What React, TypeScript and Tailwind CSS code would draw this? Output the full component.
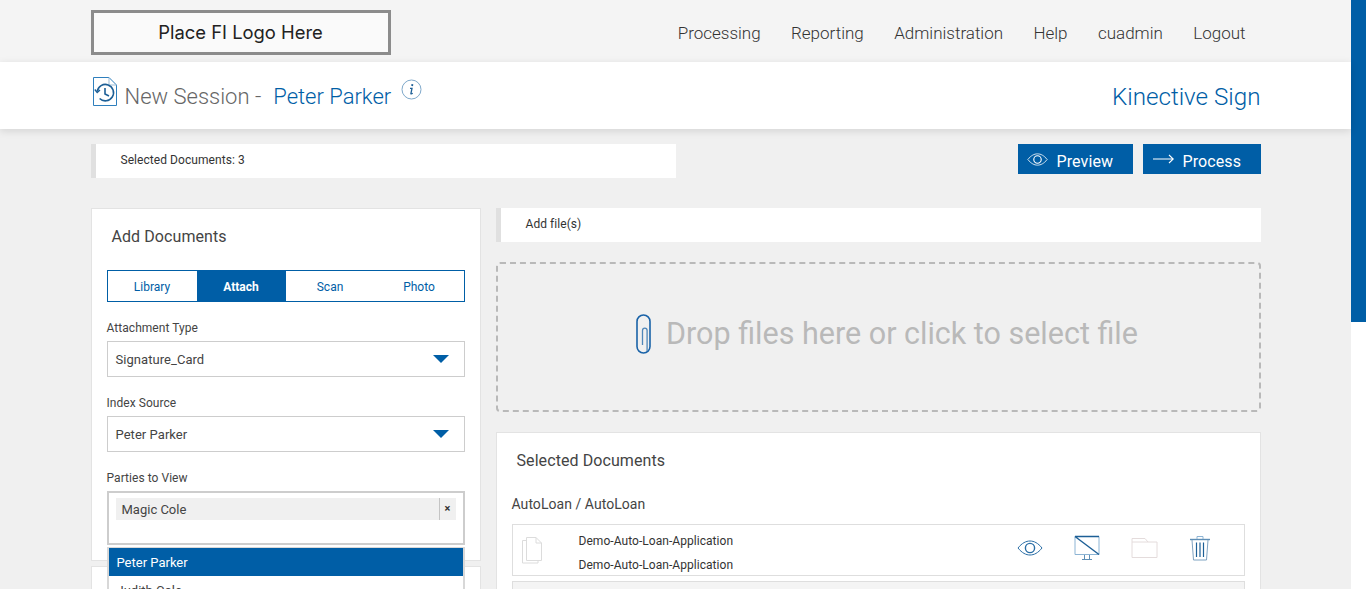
const navItems = ['Processing', 'Reporting', 'Administration', 'Help', 'cuadmin', 'Logout'];

function SessionIcon() {
  return (
    <svg width="26" height="31" viewBox="0 0 26 31" fill="none" stroke="#2f7fbd" strokeWidth="1">
      <path d="M1.5 1.5H17L24.5 9V29.5H1.5Z" />
      <path d="M17 1.5V9H24.5" stroke="#9dbcd6" />
      <path d="M5.2 15.5a8.2 8.2 0 1 1 2.4 7" strokeWidth="1.6" stroke="#1d5f96" />
      <path d="M2.8 13.5L5.2 16.5L8 14" strokeWidth="1.4" stroke="#1d5f96" />
      <path d="M13 12V18L17 20" strokeWidth="1.6" stroke="#1d5f96" />
    </svg>
  );
}

function InfoIcon() {
  return (
    <svg width="21" height="21" viewBox="0 0 21 21" fill="none">
      <circle cx="10.5" cy="10.5" r="9.5" stroke="#7fa9cb" />
      <path d="M11.4 5.2l-.3 1.8" stroke="#1d5f96" strokeWidth="1.8" />
      <path d="M9 9.3h2l-1.1 5.2c-.1.6.5.7 1.8-.2" stroke="#1d5f96" strokeWidth="1.3" />
    </svg>
  );
}

function Caret() {
  return <span className="w-0 h-0 border-l-[8px] border-r-[8px] border-t-[8px] border-l-transparent border-r-transparent border-t-[#005ea6]" />;
}

function Clip() {
  return (
    <svg width="15" height="40" viewBox="0 0 15 40" fill="none" stroke="#1a63a8" strokeWidth="1.6">
      <path d="M1 32.5V7.5a6.5 6.5 0 0 1 13 0V32.5a6.5 6.5 0 0 1-13 0" />
      <path d="M6.5 31V16.5a2.3 2.3 0 0 1 4.6 0V37" stroke="#4f86b8" strokeWidth="1.3" />
    </svg>
  );
}

function WideEye({ color, width, height }: { color: string; width: number; height: number }) {
  return (
    <svg width={width} height={height} viewBox="0 0 26 16" fill="none" stroke={color} strokeWidth="1">
      <path d="M1 8C5 3 9 1 13 1s8 2 12 7c-4 5-8 7-12 7S5 13 1 8Z" />
      <circle cx="13" cy="8" r="4.6" strokeWidth="1.4" />
    </svg>
  );
}

function ThinArrow() {
  return (
    <svg width="21" height="10" viewBox="0 0 21 10" fill="none" stroke="#fff" strokeWidth="1.1">
      <path d="M0 5H20M16 1L20.3 5L16 9" />
    </svg>
  );
}

function DocIcon() {
  return (
    <svg width="22" height="28" viewBox="0 0 22 28" fill="none" stroke="#dcdcdc">
      <path d="M5.5 1.5H15L20.5 7V24.5H5.5Z" />
      <path d="M15 1.5V7H20.5" />
      <path d="M5.5 4.5H1.5V27H17V24.5" />
    </svg>
  );
}

function NoSignIcon() {
  return (
    <svg width="26" height="26" viewBox="0 0 26 26" fill="none">
      <path d="M1 1.5H25V19.5H1Z" stroke="#8db4d4" />
      <path d="M1 1.5H25M1 1.5L25 19.5" stroke="#1d5f96" strokeWidth="1.4" />
      <path d="M10.5 20V24M15.5 20V24M8 24.5H18" stroke="#5f8fb6" />
    </svg>
  );
}

function FolderIcon() {
  return (
    <svg width="27" height="22" viewBox="0 0 27 22" fill="none" stroke="#e4dcdc">
      <path d="M1 20.5V1.5H14L17 5H26V20.5Z" />
      <path d="M1 5H17" />
    </svg>
  );
}

function TrashIcon() {
  return (
    <svg width="22" height="26" viewBox="0 0 22 26" fill="none">
      <path d="M1 4.5H21" stroke="#5f8fb6" strokeWidth="1.4" />
      <path d="M8 4V1.5H14V4" stroke="#8db4d4" />
      <path d="M3 5L4.5 25H17.5L19 5" stroke="#7fa3c2" />
      <path d="M7.5 7.5V22M11 7.5V22M14.5 7.5V22" stroke="#1d5f96" strokeWidth="1.2" />
    </svg>
  );
}

function NoteBar({ label, className }: { label: string; className: string }) {
  return (
    <div className={`h-[34px] bg-white border-l-[5px] border-[#e0e0e0] flex items-center pl-[25px] pb-[2px] text-[12px] tracking-[0.06px] text-[#333] ${className}`}>
      {label}
    </div>
  );
}

function SelectBox({ label, value }: { label: string; value: string }) {
  return (
    <div className="mb-[19px]">
      <div className="text-[12px] leading-[14px] tracking-[0.05px] text-[#444] mb-[6px]">{label}</div>
      <div className="h-[36px] border border-[#cdcdcd] flex items-center justify-between pl-[8px] pr-[15px] text-[13px] tracking-[0.05px] text-[#444]">
        <span className="pt-[1px]">{value}</span>
        <Caret />
      </div>
    </div>
  );
}

export default function App() {
  return (
    <div className="h-[589px] overflow-hidden flex bg-white font-['Roboto',sans-serif]">
      <div className="w-[1351px] shrink-0 bg-[#f0f0f0]">
        <header className="h-[62px] bg-[#f4f4f4]">
          <div className="w-[1170px] mx-auto flex justify-between pt-[10px]">
            <div className="w-[300px] h-[45px] pt-[1px] border-[3px] border-[#8c8c8c] bg-[#fafafa] flex items-center justify-center text-[18.4px] text-[#222] font-['Inter',sans-serif]">
              Place FI Logo Here
            </div>
            <nav className="flex gap-[30.4px] pr-[15px] pt-[12px] text-[17px] leading-[22px] font-light text-[#333]">
              {navItems.map((item) => (
                <span key={item}>{item}</span>
              ))}
            </nav>
          </div>
        </header>

        <div className="h-[67px] bg-white shadow-[0_2px_8px_rgba(0,0,0,0.12)] relative">
          <div className="w-[1170px] mx-auto flex justify-between h-full">
            <div className="flex items-start pl-[1px] pt-[14px]">
              <SessionIcon />
              <span className="ml-[7px] mt-[6px] text-[22px] leading-[30px] font-light text-[#666]">New Session - </span>
              <span className="ml-[12px] mt-[6px] text-[22px] leading-[30px] font-light text-[#005ea6]">Peter Parker</span>
              <span className="ml-[10px] mt-[3px]"><InfoIcon /></span>
            </div>
            <div className="pt-[20px] text-[24.2px] leading-[30px] font-light text-[#005ea6]">Kinective Sign</div>
          </div>
        </div>

        <div className="w-[1170px] mx-auto">
          <div className="flex justify-between pt-[15px]">
            <NoteBar label="Selected Documents: 3" className="w-[585px]" />
            <div className="flex gap-[10px] text-[16px] text-white">
              <div className="w-[115px] h-[30px] bg-[#005ea6] flex items-center pl-[9px]">
                <WideEye color="#fff" width={21} height={13} />
                <span className="ml-[9px] pt-[6px] tracking-[0.1px]">Preview</span>
              </div>
              <div className="w-[118px] h-[30px] bg-[#005ea6] flex items-center pl-[10px]">
                <ThinArrow />
                <span className="ml-[9px] pt-[6px] tracking-[0.1px]">Process</span>
              </div>
            </div>
          </div>

          <div className="flex gap-[15px] pt-[30px]">
            <div className="w-[390px] shrink-0">
              <section className="relative h-[353px] bg-white border border-[#e3e3e3] px-[15px]">
                <h2 className="pt-[18px] pl-[5px] text-[16px] leading-[20px] tracking-[0.08px] text-[#444]">Add Documents</h2>
                <div className="mt-[23px] h-[32px] border border-[#005ea6] flex text-[12px] text-[#005ea6]">
                  <span className="w-[89px] pt-[1px] flex items-center justify-center">Library</span>
                  <span className="w-[89px] pt-[1px] flex items-center justify-center bg-[#005ea6] text-white font-bold">Attach</span>
                  <span className="w-[89px] pt-[1px] flex items-center justify-center">Scan</span>
                  <span className="w-[89px] pt-[1px] flex items-center justify-center">Photo</span>
                </div>
                <div className="mt-[19px]">
                  <SelectBox label="Attachment Type" value="Signature_Card" />
                  <SelectBox label="Index Source" value="Peter Parker" />
                  <div className="text-[12px] leading-[14px] tracking-[0.05px] text-[#444] mb-[6px]">Parties to View</div>
                  <div className="h-[54px] border-2 border-[#cdcdcd] pl-[7px] pr-[7px] pt-[5px]">
                    <div className="h-[22px] bg-[#f0f0f0] flex items-center justify-between text-[13px] text-[#444] pl-[6px]">
                      <span className="pt-[1px]">Magic Cole</span>
                      <span className="w-[17px] h-full border-l border-[#c4c4c4] flex items-center justify-center text-[11px] font-bold text-[#333]">×</span>
                    </div>
                  </div>
                </div>
                <div className="absolute left-[15px] top-[338px] w-[358px] h-[60px] bg-white border-x-2 border-t border-[#d8d8d8] text-[13px] text-[#444] z-10">
                  <div className="h-[28px] pt-[1px] bg-[#005ea6] text-white flex items-center pl-[8px]">Peter Parker</div>
                  <div className="h-[28px] pt-[1px] flex items-center pl-[8px]">Judith Cole</div>
                </div>
              </section>
              <section className="mt-[5px] h-[60px] bg-white border border-[#e3e3e3]" />
            </div>

            <div className="flex-1 min-w-0">
              <NoteBar label="Add file(s)" className="" />
              <div className="mt-[20px] h-[150px] rounded-[4px] border-2 border-dashed border-[#b9b9b9] flex items-center justify-center gap-[15px] pb-[7px] pl-[18px] text-[30.5px] text-[#b9b9b9]">
                <Clip />
                <span>Drop files here or click to select file</span>
              </div>
              <section className="mt-[20px] h-[200px] bg-white border border-[#e3e3e3] px-[15px]">
                <h2 className="pt-[18px] pl-[5px] text-[16px] leading-[20px] tracking-[0.08px] text-[#444]">Selected Documents</h2>
                <div className="mt-[24px] text-[14px] leading-[18px] tracking-[0.05px] text-[#444]">AutoLoan / AutoLoan</div>
                <div className="mt-[11px] h-[52px] border border-[#dedede] flex items-center pl-[8px] pr-[33px]">
                  <DocIcon />
                  <div className="ml-[36px] pt-[5px] flex-1 text-[12px] leading-[24px] tracking-[0.05px] text-[#333]">
                    <div>Demo-Auto-Loan-Application</div>
                    <div>Demo-Auto-Loan-Application</div>
                  </div>
                  <div className="flex items-center gap-[31px] pb-[4px]">
                    <WideEye color="#2a6ea6" width={26} height={16} />
                    <NoSignIcon />
                    <FolderIcon />
                    <TrashIcon />
                  </div>
                </div>
                <div className="mt-[5px] h-[52px] border border-[#dedede] bg-[#f4f4f4]" />
              </section>
            </div>
          </div>
        </div>
      </div>
      <aside className="flex-1">
        <div className="h-[322px] bg-[#005ea6]" />
      </aside>
    </div>
  );
}
